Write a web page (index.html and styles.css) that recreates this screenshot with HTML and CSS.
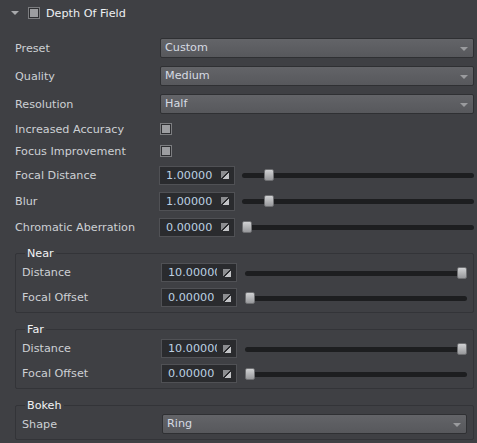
FILE: index.html
```html
<!DOCTYPE html>
<html lang="en">
<head>
    <meta charset="UTF-8">
    <title>Depth Of Field</title>
    <link rel="stylesheet" href="styles.css">
</head>
<body>
    <div class="panel">
        <div class="head">
            <span class="arrow"></span>
            <span class="check"></span>
            <span class="title">Depth Of Field</span>
        </div>

        <div class="props">
            <div class="row tall">
                <label>Preset</label>
                <div class="combo">Custom</div>
            </div>
            <div class="row tall">
                <label>Quality</label>
                <div class="combo">Medium</div>
            </div>
            <div class="row tall">
                <label>Resolution</label>
                <div class="combo">Half</div>
            </div>
            <div class="row short">
                <label>Increased Accuracy</label>
                <span class="check"></span>
            </div>
            <div class="row short">
                <label>Focus Improvement</label>
                <span class="check"></span>
            </div>
            <div class="row">
                <label>Focal Distance</label>
                <div class="spin"><span class="val">1.00000</span><span class="spin-icon"></span></div>
                <div class="slider"><span class="handle" style="left: calc((100% - 10px) * 0.1)"></span></div>
            </div>
            <div class="row">
                <label>Blur</label>
                <div class="spin"><span class="val">1.00000</span><span class="spin-icon"></span></div>
                <div class="slider"><span class="handle" style="left: calc((100% - 10px) * 0.1)"></span></div>
            </div>
            <div class="row">
                <label>Chromatic Aberration</label>
                <div class="spin"><span class="val">0.00000</span><span class="spin-icon"></span></div>
                <div class="slider"><span class="handle" style="left: 0"></span></div>
            </div>
        </div>

        <fieldset class="group">
            <legend>Near</legend>
            <div class="row">
                <label>Distance</label>
                <div class="spin"><span class="val">10.000000</span><span class="spin-icon"></span></div>
                <div class="slider"><span class="handle" style="left: calc(100% - 10px)"></span></div>
            </div>
            <div class="row">
                <label>Focal Offset</label>
                <div class="spin"><span class="val">0.00000</span><span class="spin-icon"></span></div>
                <div class="slider"><span class="handle" style="left: 0"></span></div>
            </div>
        </fieldset>

        <fieldset class="group">
            <legend>Far</legend>
            <div class="row">
                <label>Distance</label>
                <div class="spin"><span class="val">10.000000</span><span class="spin-icon"></span></div>
                <div class="slider"><span class="handle" style="left: calc(100% - 10px)"></span></div>
            </div>
            <div class="row">
                <label>Focal Offset</label>
                <div class="spin"><span class="val">0.00000</span><span class="spin-icon"></span></div>
                <div class="slider"><span class="handle" style="left: 0"></span></div>
            </div>
        </fieldset>

        <fieldset class="group bokeh">
            <legend>Bokeh</legend>
            <div class="row">
                <label>Shape</label>
                <div class="combo">Ring</div>
            </div>
        </fieldset>
    </div>
</body>
</html>
```

FILE: styles.css
```css
body {
    margin: 0;
    background: #3f4044;
    font-family: 'DejaVu Sans', sans-serif;
    font-size: 11.2px;
    color: #cdd0d4;
}
.panel {
    width: 477px;
    height: 443px;
    overflow: hidden;
}
.head {
    height: 26px;
    display: flex;
    align-items: center;
}
.arrow {
    width: 0;
    height: 0;
    margin-left: 11px;
    border-left: 4px solid transparent;
    border-right: 4px solid transparent;
    border-top: 4px solid #a8a9ac;
}
.head .check {
    margin-left: 9px;
}
.title {
    margin-left: 6px;
    color: #eef0f3;
}
.check {
    width: 10px;
    height: 10px;
    border: 1px solid #7c7d80;
    background: #9c9da0;
    box-shadow: inset 0 0 0 1px #2e2f32;
    flex: none;
}
.props {
    padding: 8px 3px 0 15px;
}
.row {
    display: flex;
    align-items: center;
    height: 26px;
}
.row.tall {
    height: 28px;
}
.row.short {
    height: 22px;
}
.row label {
    width: 145px;
    flex: none;
}
.combo {
    flex: 1;
    height: 18px;
    line-height: 18px;
    padding-left: 4px;
    border: 1px solid #2f3033;
    border-radius: 2px;
    background: linear-gradient(#636468, #57585c);
    color: #d6dbe3;
    position: relative;
}
.combo::after {
    content: "";
    position: absolute;
    right: 5px;
    top: 8px;
    border-left: 4px solid transparent;
    border-right: 4px solid transparent;
    border-top: 4px solid #9a9b9e;
}
.spin {
    flex: none;
    display: flex;
    align-items: center;
    padding-left: 6px;
    box-sizing: border-box;
    width: 76px;
    height: 19px;
    border: 1px solid #505155;
    background: #2a2b2e;
    color: #bcd0e2;
    margin-left: -1px;
    overflow: hidden;
}
.spin .val {
    width: 49px;
    overflow: hidden;
    white-space: nowrap;
    flex: none;
}
.spin-icon {
    width: 8px;
    height: 8px;
    margin-left: auto;
    margin-right: 5px;
    flex: none;
    background:
        linear-gradient(to bottom right, #8c8d90 0 45%, transparent 45% 58%, #c2c3c6 58%);
}
.slider {
    flex: 1;
    height: 12px;
    margin-left: 7px;
    position: relative;
}
.slider::before {
    content: "";
    position: absolute;
    left: 0;
    right: 0;
    top: 4px;
    height: 5px;
    border-radius: 3px;
    background: #1d1e20;
}
.handle {
    position: absolute;
    top: 0;
    width: 8px;
    height: 10px;
    border: 1px solid #6e6f72;
    border-radius: 2px;
    background: linear-gradient(#d0d1d3, #97989b);
}
.group {
    margin: 7px 3px 0 15px;
    padding: 0 6px 2px 6px;
    border: 1px solid #333438;
    border-radius: 2px;
    min-width: 0;
}
.group + .group {
    margin-top: 10px;
}
.group legend {
    padding: 0 2px;
    margin-left: 3px;
    color: #f2f3f5;
    line-height: 13px;
}
.group .row {
    height: 25px;
}
.group .row label {
    width: 139px;
}
.group .spin {
    margin-left: 0;
}
.group .slider {
    margin-left: 8px;
}
.bokeh {
    padding-bottom: 3px;
}
.bokeh .row {
    height: 24px;
}
.bokeh .row label {
    width: 140px;
}
```
